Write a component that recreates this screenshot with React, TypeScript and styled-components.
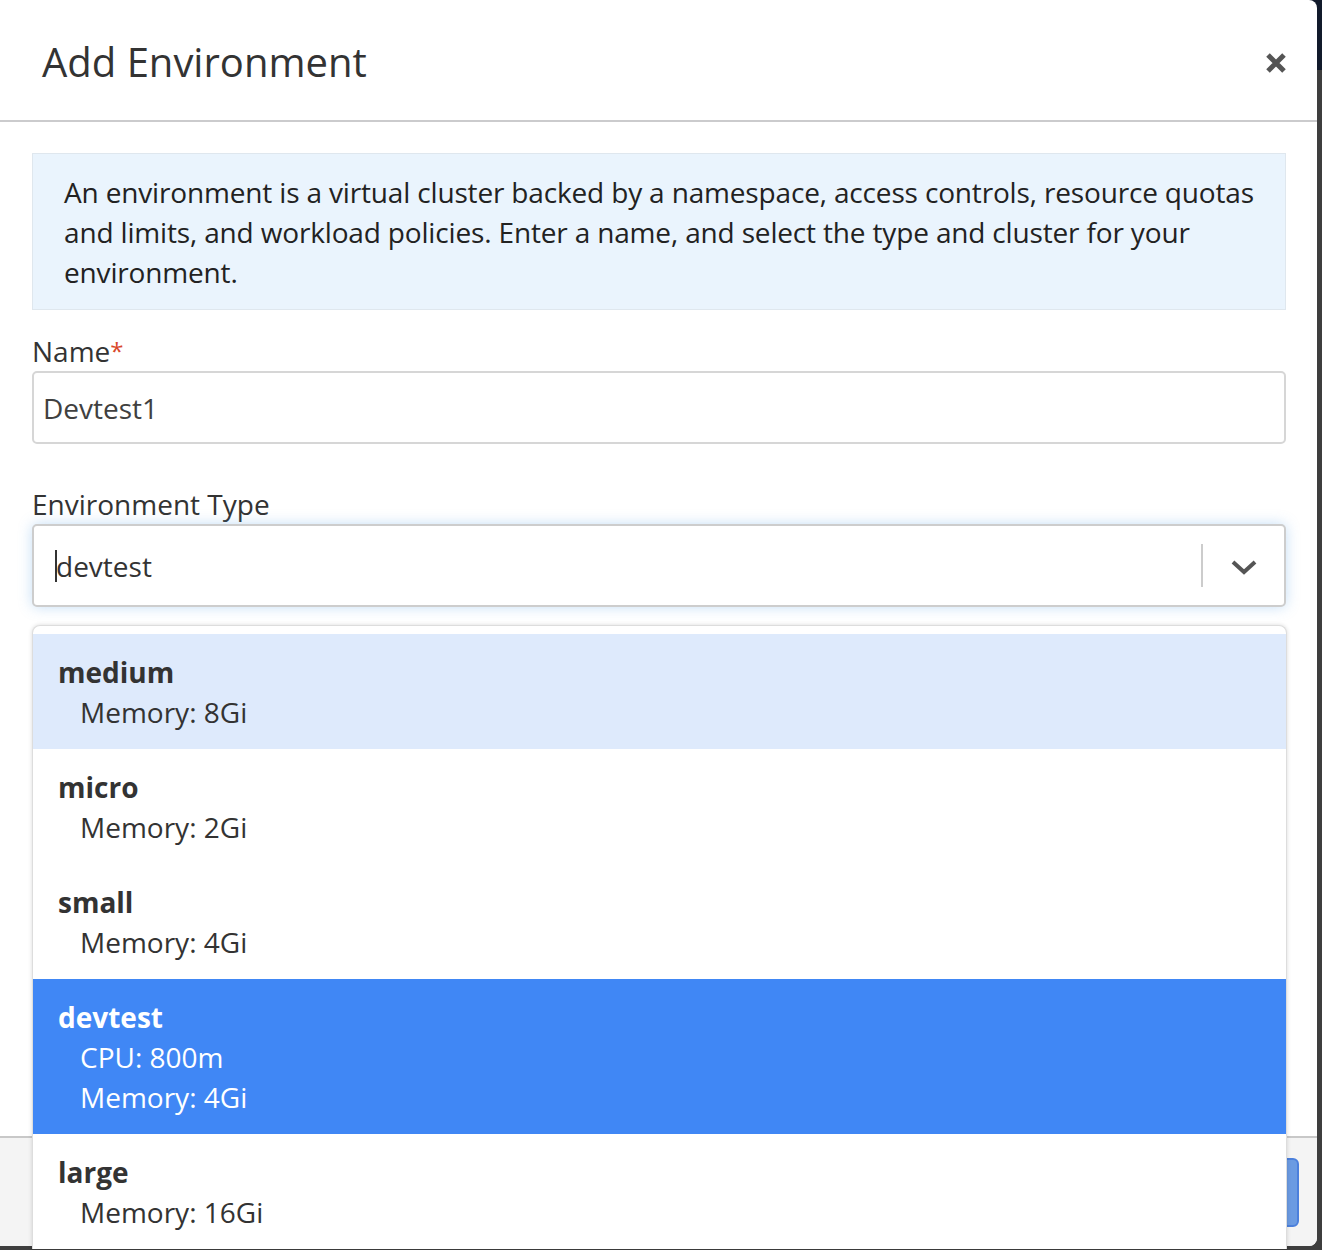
import React from 'react';
import styled, { createGlobalStyle } from 'styled-components';

type EnvType = {
  name: string;
  lines: string[];
};

const envTypes: EnvType[] = [
  { name: 'medium', lines: ['Memory: 8Gi'] },
  { name: 'micro', lines: ['Memory: 2Gi'] },
  { name: 'small', lines: ['Memory: 4Gi'] },
  { name: 'devtest', lines: ['CPU: 800m', 'Memory: 4Gi'] },
  { name: 'large', lines: ['Memory: 16Gi'] },
];

const App = () => {
  return (
    <>
      <GlobalStyle />
      <Modal>
        <Header>
          <Title>Add Environment</Title>
          <CloseButton aria-label="close">
            <svg width="22" height="24" viewBox="0 0 22 24">
              <path
                d="M3 4 L19 20 M19 4 L3 20"
                stroke="#555"
                strokeWidth="5"
                strokeLinecap="butt"
              />
            </svg>
          </CloseButton>
        </Header>
        <Body>
          <InfoBox>
            An environment is a virtual cluster backed by a namespace, access
            controls, resource quotas and limits, and workload policies. Enter a
            name, and select the type and cluster for your environment.
          </InfoBox>
          <Field>
            <Label>
              Name<Required>*</Required>
            </Label>
            <TextInput>Devtest1</TextInput>
          </Field>
          <Field $spaced>
            <Label>Environment Type</Label>
            <SelectWrapper>
              <Select>
                <SelectValue>
                  <Caret />
                  devtest
                </SelectValue>
                <Separator />
                <ChevronBox>
                  <svg width="28" height="18" viewBox="0 0 28 18">
                    <path
                      d="M3 4 L14 14 L25 4"
                      fill="none"
                      stroke="#555"
                      strokeWidth="4"
                    />
                  </svg>
                </ChevronBox>
              </Select>
              <Menu>
                {envTypes.map((env, i) => (
                  <Option
                    key={env.name}
                    $variant={i === 0 ? 'hover' : env.name === 'devtest' ? 'selected' : 'plain'}
                  >
                    <OptionName>{env.name}</OptionName>
                    {env.lines.map((line) => (
                      <OptionDetail key={line}>{line}</OptionDetail>
                    ))}
                  </Option>
                ))}
              </Menu>
            </SelectWrapper>
          </Field>
        </Body>
        <Footer>
          <PrimaryButton>Save</PrimaryButton>
        </Footer>
      </Modal>
    </>
  );
};

export default App;

const GlobalStyle = createGlobalStyle`
  html {
    background: linear-gradient(to bottom, #111a2b 0, #111a2b 70px, #3e3e3e 70px);
    min-height: 1250px;
  }
  html, body {
    margin: 0;
    padding: 0;
    overflow: hidden;
  }
  body {
    height: 1250px;
    font-family: "Open Sans", "Liberation Sans", sans-serif;
  }
`;

const Modal = styled.div`
  width: 1317px;
  height: 1246px;
  background-color: #ffffff;
  border-radius: 0 8px 8px 0;
  display: flex;
  flex-direction: column;
`;

const Header = styled.div`
  height: 120px;
  flex-shrink: 0;
  display: flex;
  align-items: center;
  justify-content: space-between;
  padding: 0 30px 0 42px;
  border-bottom: 2px solid #cbcbcd;
`;

const Title = styled.h1`
  margin: 0;
  font-size: 40px;
  font-weight: 400;
  color: #333333;
  line-height: 44px;
  margin-top: 4px;
`;

const CloseButton = styled.div`
  display: flex;
  margin-top: 6px;
`;

const Body = styled.div`
  flex: 1;
  padding: 31px 31px 0 32px;
`;

const InfoBox = styled.div`
  background-color: #eaf4fd;
  border: 1px solid #dfe7ee;
  padding: 18px 28px 17px 31px;
  font-size: 28px;
  line-height: 40px;
  letter-spacing: -0.16px;
  color: #222222;
`;

const Field = styled.div<{ $spaced?: boolean }>`
  margin-top: ${(p) => (p.$spaced ? '40px' : '21px')};
`;

const Label = styled.div`
  font-size: 28px;
  line-height: 40px;
  color: #333333;
`;

const Required = styled.span`
  color: #d9472b;
  font-size: 24px;
  vertical-align: 2px;
`;

const TextInput = styled.div`
  height: 69px;
  border: 2px solid #d6d6d6;
  border-radius: 5px;
  padding: 0 9px;
  display: flex;
  align-items: center;
  font-size: 28px;
  color: #404040;
`;

const SelectWrapper = styled.div`
  position: relative;
`;

const Select = styled.div`
  height: 79px;
  border: 2px solid #cdcdcd;
  border-radius: 5px;
  display: flex;
  align-items: center;
  box-shadow: 0 0 14px rgba(90, 160, 230, 0.35);
  background-color: #ffffff;
`;

const SelectValue = styled.div`
  flex: 1;
  padding-left: 21px;
  font-size: 28px;
  color: #333333;
  display: flex;
  align-items: center;
`;

const Caret = styled.span`
  display: inline-block;
  width: 2px;
  height: 32px;
  background-color: #333333;
  margin-right: -1px;
`;

const Separator = styled.div`
  width: 2px;
  height: 43px;
  background-color: #cccccc;
`;

const ChevronBox = styled.div`
  width: 81px;
  display: flex;
  justify-content: center;
  align-items: center;
  padding-top: 2px;
`;

const Menu = styled.div`
  position: absolute;
  top: calc(100% + 18px);
  left: 0;
  right: -1px;
  background-color: #ffffff;
  border: 1px solid #dddddd;
  border-bottom: none;
  border-radius: 8px 8px 0 0;
  box-shadow: 0 0 4px rgba(0, 0, 0, 0.15);
  padding-top: 8px;
`;

const optionBg = {
  hover: '#deeafc',
  selected: '#4087f5',
  plain: '#ffffff',
};

const Option = styled.div<{ $variant: 'hover' | 'selected' | 'plain' }>`
  padding: 18px 24px 17px 25px;
  background-color: ${(p) => optionBg[p.$variant]};
  color: ${(p) => (p.$variant === 'selected' ? '#ffffff' : '#333333')};
  font-size: 28px;
  line-height: 40px;
`;

const OptionName = styled.div`
  font-weight: 700;
`;

const OptionDetail = styled.div`
  padding-left: 22px;
`;

const Footer = styled.div`
  flex-shrink: 0;
  height: 110px;
  border-top: 2px solid #c8c8c8;
  background-color: #f4f4f4;
  border-radius: 0 0 8px 0;
  display: flex;
  justify-content: flex-end;
  align-items: flex-start;
  padding: 20px 18px 0 0;
  box-sizing: border-box;
`;

const PrimaryButton = styled.div`
  height: 65px;
  padding: 0 30px;
  background-color: #6b9be2;
  border: 2px solid #4c80dc;
  border-radius: 6px;
  color: #ffffff;
  font-size: 28px;
  display: flex;
  align-items: center;
`;
